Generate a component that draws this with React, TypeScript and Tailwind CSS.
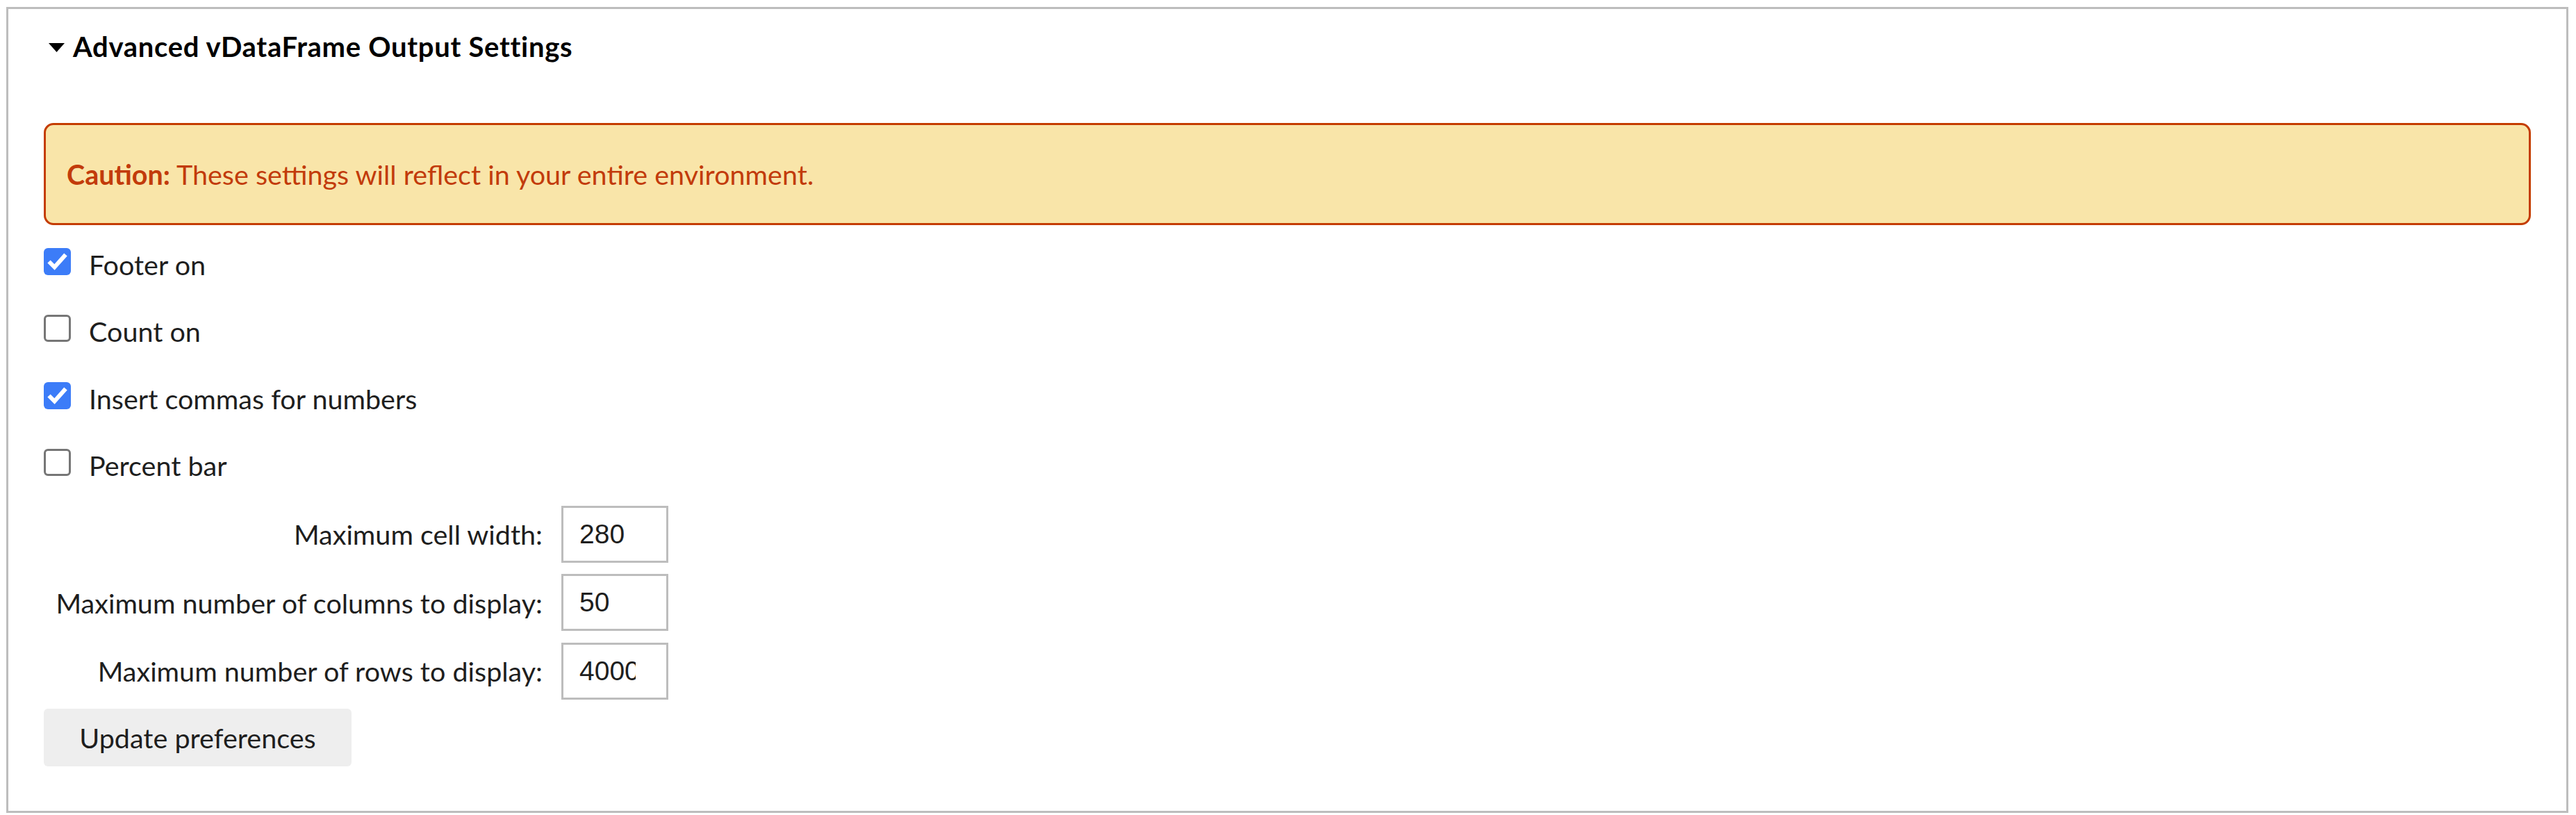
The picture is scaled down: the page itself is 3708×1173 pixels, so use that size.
import React from "react";

function Check({ checked }: { checked: boolean }) {
  if (checked) {
    return (
      <div className="w-[39px] h-[39px] rounded-[6px] bg-[#3c7cf8] shrink-0">
        <svg width="39" height="39" viewBox="0 0 39 39" className="block">
          <path d="M7.5 19.5 L15.5 27.5 L31.5 9.5" fill="none" stroke="#ffffff" strokeWidth="6" strokeLinejoin="miter" />
        </svg>
      </div>
    );
  }
  return <div className="w-[39px] h-[39px] rounded-[6px] border-[3px] border-[#767676] bg-white shrink-0" />;
}

function CheckRow({ checked, label }: { checked: boolean; label: string }) {
  return (
    <div className="flex items-start gap-[26px]">
      <Check checked={checked} />
      <span className="text-[39.5px] leading-[47px] text-[#1e1e1e] whitespace-nowrap">{label}</span>
    </div>
  );
}

function NumRow({ label, value }: { label: string; value: string }) {
  return (
    <div className="flex items-center gap-[27px]">
      <span className="w-[718px] text-right text-[39.5px] leading-[47px] text-[#1e1e1e] whitespace-nowrap">{label}</span>
      <input
        type="text"
        readOnly
        value={value}
        className="w-[154px] h-[82px] border-[3px] border-[#bdbdbd] bg-white pl-[23px] pr-[44px] text-[39px] text-[#1e1e1e] outline-none"
        style={{ fontFamily: '"Liberation Sans", Arial, sans-serif' }}
      />
    </div>
  );
}

export default function App() {
  return (
    <div
      className="w-full h-[1173px] bg-white pt-[10px] pl-[9px] pr-[11px] overflow-hidden"
      style={{ fontFamily: 'Lato, "Open Sans", sans-serif' }}
    >
      <div className="h-[1160px] border-[3px] border-[#bdbdbd] px-[51px]">
        <div className="mt-[30px] ml-[7px] flex items-center gap-[12px] h-[48px]">
          <svg width="23" height="13" viewBox="0 0 23 13" className="block mt-[3px]">
            <polygon points="0,0 23,0 11.5,13" fill="#000000" />
          </svg>
          <span className="text-[40px] leading-[48px] font-bold tracking-[0.7px] text-black whitespace-nowrap">
            Advanced vDataFrame Output Settings
          </span>
        </div>

        <div className="mt-[86px] h-[147px] border-[3px] border-[#c43c00] rounded-[14px] bg-[#f9e5a9] pl-[30px] flex items-center">
          <span className="text-[39.5px] leading-[47px] text-[#c23b0b] whitespace-nowrap">
            <span className="font-bold">Caution:</span> These settings will reflect in your entire environment.
          </span>
        </div>

        <div className="mt-[33px] flex flex-col gap-[49.3px]">
          <CheckRow checked label="Footer on" />
          <CheckRow checked={false} label="Count on" />
          <CheckRow checked label="Insert commas for numbers" />
          <CheckRow checked={false} label="Percent bar" />
        </div>

        <div className="mt-[35px] flex flex-col gap-[16.5px]">
          <NumRow label="Maximum cell width:" value="280" />
          <NumRow label="Maximum number of columns to display:" value="50" />
          <NumRow label="Maximum number of rows to display:" value="4000" />
        </div>

        <button className="mt-[13px] w-[443px] h-[83px] rounded-[6px] bg-[#eeeeee] text-[39.5px] text-[#1e1e1e] leading-[47px]">
          Update preferences
        </button>
      </div>
    </div>
  );
}
